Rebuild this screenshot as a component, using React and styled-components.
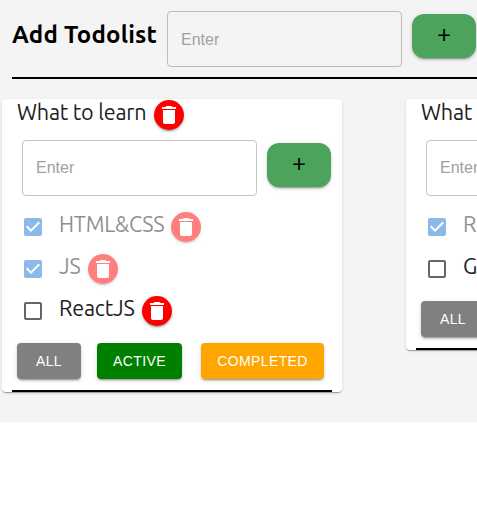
import React from "react";
import styled, { createGlobalStyle } from "styled-components";

const GlobalStyle = createGlobalStyle`
  * { box-sizing: border-box; }
  body { margin: 0; background: #fff; overflow: hidden; }
  button { font: inherit; border: 0; margin: 0; padding: 0; cursor: pointer; }
`;

const display = `"Ubuntu", "Noto Sans", sans-serif`;
const ui = `"Liberation Sans", Arial, sans-serif`;
const raised = `0 3px 1px -2px rgba(0,0,0,.2), 0 2px 2px 0 rgba(0,0,0,.14), 0 1px 5px 0 rgba(0,0,0,.12)`;

const Page = styled.main`
  width: 100%;
  height: 422px;
  padding-top: 11px;
  background: #f4f4f4;
  overflow: hidden;
`;

const Header = styled.header`
  display: flex;
  align-items: flex-start;
  height: 68px;
  margin-left: 12px;
  border-bottom: 2px solid #000;
`;

const Heading = styled.h1`
  flex: none;
  width: 155px;
  margin: 0;
  padding-top: 8px;
  font: bold 24px/32px ${display};
  letter-spacing: 0.2px;
  white-space: nowrap;
`;

const Field = styled.input`
  flex: none;
  width: 235px;
  height: 56px;
  padding: ${(p) => (p.$onGrey ? "1px 13px 0" : "0 13px 1px")};
  border: 1px solid ${(p) => (p.$onGrey ? "#bbbbbb" : "#c4c4c4")};
  border-radius: 4px;
  background: transparent;
  font: 16px ${ui};
  outline: 0;
  &::placeholder { color: #a1a1a1; opacity: 1; }
`;

const AddButton = styled.button`
  flex: none;
  width: 64px;
  height: 44px;
  margin: 3px 0 0 10px;
  padding-bottom: 6px;
  border-radius: 12px;
  background: #4ca45c;
  color: #000;
  box-shadow: ${raised};
  && { font: 25px/38px ${display}; }
`;

const Board = styled.div`
  display: flex;
  align-items: flex-start;
  gap: 64px;
  padding: 20px 0 0 2px;
`;

const Card = styled.section`
  flex: none;
  width: 340px;
  border-radius: 4px;
  background: #fff;
  box-shadow: 0 2px 1px -1px rgba(0,0,0,.2), 0 1px 1px 0 rgba(0,0,0,.14), 0 1px 3px 0 rgba(0,0,0,.12);
`;

const TitleRow = styled.div`
  display: flex;
  height: 41px;
  padding: 1px 0 0 15px;
`;

const Label = styled.span`
  width: ${(p) => p.$width}px;
  margin-right: 7px;
  color: #212121;
  font: 21.6px/25px ${display};
  letter-spacing: -0.2px;
  white-space: nowrap;
`;

const Round = styled.button`
  display: flex;
  flex: none;
  align-items: center;
  justify-content: center;
  width: 30px;
  height: 30px;
  border-radius: 50%;
  background: red;
  box-shadow: ${raised};
`;

const Icon = styled.svg`
  display: block;
  flex: none;
  width: 24px;
  height: 24px;
  fill: ${(p) => p.$color};
`;

const AddRow = styled.div`
  display: flex;
  height: 72px;
  padding-left: 20px;
`;

const Task = styled.li`
  display: flex;
  height: 42px;
  padding-left: 19px;
  opacity: ${(p) => (p.$done ? 0.5 : 1)};
`;

const Tick = styled.span`
  flex: none;
  width: 38px;
  padding-top: 3px;
`;

const Tasks = styled.ul`
  margin: 0;
  padding: 0 0 5px;
  list-style: none;
`;

const Filters = styled.div`
  display: flex;
  height: 47px;
  padding-left: 15px;
`;

const Filter = styled.button`
  flex: none;
  width: ${(p) => p.$width}px;
  height: 36px;
  margin-right: ${(p) => p.$gap}px;
  border-radius: 4px;
  background: ${(p) => p.$color};
  color: #fff;
  box-shadow: ${raised};
  && { font: 14px/36px ${ui}; letter-spacing: 0.4px; }
`;

const Rule = styled.div`
  height: 2px;
  margin: 0 10px;
  background: #000;
`;

const checkedPath = "M19 3H5c-1.11 0-2 .9-2 2v14c0 1.1.89 2 2 2h14c1.11 0 2-.9 2-2V5c0-1.1-.89-2-2-2zm-9 14l-5-5 1.41-1.41L10 14.17l7.59-7.59L19 8l-9 9z";
const emptyPath = "M19 5v14H5V5h14m0-2H5c-1.1 0-2 .9-2 2v14c0 1.1.9 2 2 2h14c1.1 0 2-.9 2-2V5c0-1.1-.9-2-2-2z";

function Delete() {
  return (
    <Round aria-label="Delete">
      <Icon viewBox="0 0 24 24" $color="#fff">
        <path d="M6 19c0 1.1.9 2 2 2h8c1.1 0 2-.9 2-2V7H6v12zM19 4h-3.5l-1-1h-5l-1 1H5v2h14V4z" />
      </Icon>
    </Round>
  );
}

function TodoCard({ tasks }) {
  return (
    <Card>
      <TitleRow>
        <Label $width={130}>What to learn</Label>
        <Delete />
      </TitleRow>
      <AddRow>
        <Field placeholder="Enter" />
        <AddButton>+</AddButton>
      </AddRow>
      <Tasks>
        {tasks.map((t) => (
          <Task key={t.name} $done={t.done}>
            <Tick>
              <Icon viewBox="0 0 24 24" $color={t.done ? "#1976d2" : "#666"}>
                <path d={t.done ? checkedPath : emptyPath} />
              </Icon>
            </Tick>
            <Label $width={t.width}>{t.name}</Label>
            <Delete />
          </Task>
        ))}
      </Tasks>
      <Filters>
        <Filter $width={64} $gap={16} $color="gray">ALL</Filter>
        <Filter $width={85} $gap={19} $color="green">ACTIVE</Filter>
        <Filter $width={123} $gap={0} $color="orange">COMPLETED</Filter>
      </Filters>
      <Rule />
    </Card>
  );
}

const learning = [
  { name: "HTML&CSS", done: true, width: 105 },
  { name: "JS", done: true, width: 22 },
  { name: "ReactJS", done: false, width: 76 },
];

const buying = [
  { name: "Rest API", done: true, width: 80 },
  { name: "GraphQL", done: false, width: 80 },
];

export default function App() {
  return (
    <>
      <GlobalStyle />
      <Page>
        <Header>
          <Heading>Add Todolist</Heading>
          <Field $onGrey placeholder="Enter" />
          <AddButton>+</AddButton>
        </Header>
        <Board>
          <TodoCard tasks={learning} />
          <TodoCard tasks={buying} />
        </Board>
      </Page>
    </>
  );
}
